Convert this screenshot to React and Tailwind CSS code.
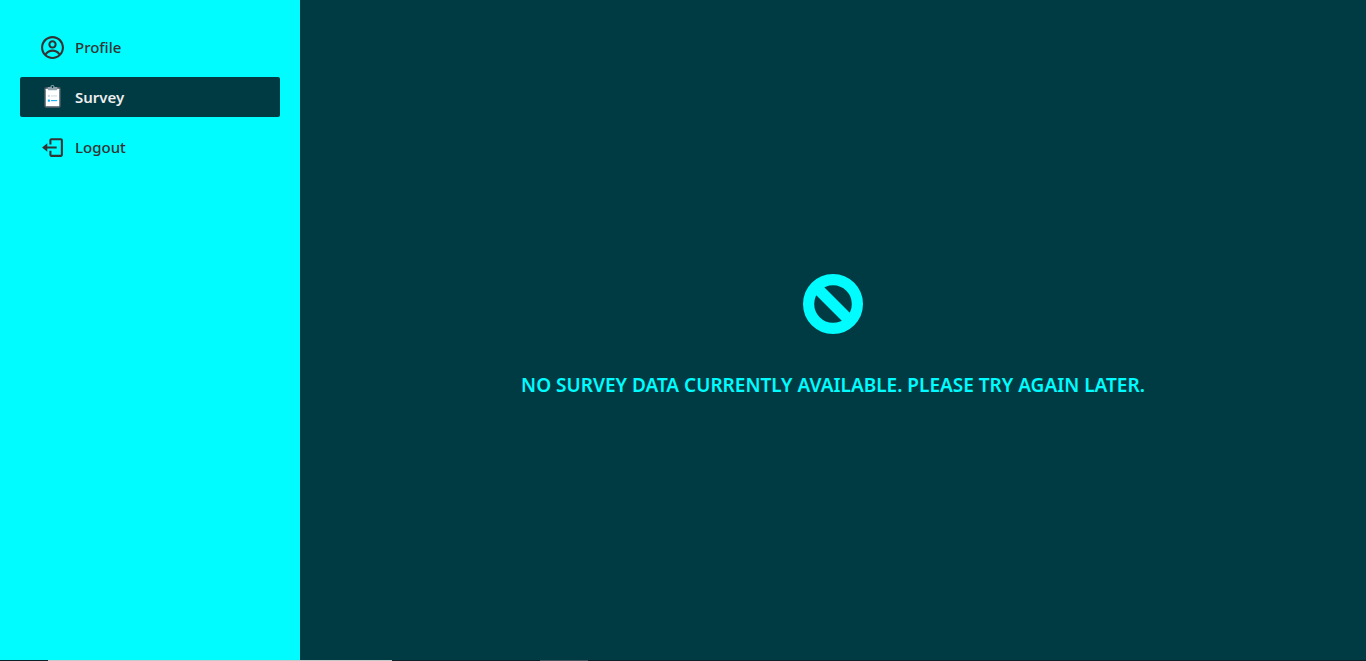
import { CgProfile } from "react-icons/cg";
import { FcSurvey } from "react-icons/fc";
import { BiLogOut } from "react-icons/bi";

const links = [
  { label: "Profile", href: "#profile", Icon: CgProfile },
  { label: "Survey", href: "#survey", Icon: FcSurvey, active: true },
  { label: "Logout", href: "#logout", Icon: BiLogOut },
];

function NavItem({ label, href, Icon, active }) {
  return (
    <li>
      <a
        href={href}
        aria-current={active ? "page" : undefined}
        className={
          active
            ? "flex h-10 items-center gap-2.5 rounded-xs bg-[#003a43] px-5 font-semibold text-[#eeeeee]"
            : "flex h-10 items-center gap-2.5 rounded-xs px-5 font-medium text-[#333333]"
        }
      >
        <Icon size={25} aria-hidden="true" />
        {label}
      </a>
    </li>
  );
}

function BlockedIcon() {
  return (
    <svg viewBox="0 0 60 60" className="size-15" fill="none" stroke="currentColor" aria-hidden="true">
      <circle cx="30" cy="30" r="24.4" strokeWidth="11.2" />
      <path d="M14 14L46 46" strokeWidth="11.4" />
    </svg>
  );
}

export default function App() {
  return (
    <div className="flex min-h-screen flex-col bg-[#003a43] font-['Noto_Sans','Open_Sans',sans-serif]">
      <div className="flex grow">
        <nav className="w-75 shrink-0 bg-[#00fcff] px-5 py-[27px] text-[15px]">
          <ul className="flex flex-col gap-2.5">
            {links.map((link) => (
              <NavItem key={link.label} {...link} />
            ))}
          </ul>
        </nav>
        <main className="flex grow flex-col items-center justify-center gap-10 pt-2.5 text-[#00fcff]">
          <BlockedIcon />
          <h1 className="text-center text-[19px] leading-[22px] font-semibold uppercase">
            No survey data currently available. Please try again later.
          </h1>
        </main>
      </div>
      <div className="flex h-px bg-[#102027]" aria-hidden="true">
        <span className="w-12" />
        <span className="w-86 bg-[#c5c8c9]" />
        <span className="w-37" />
        <span className="w-12 bg-[#46535b]" />
      </div>
    </div>
  );
}
